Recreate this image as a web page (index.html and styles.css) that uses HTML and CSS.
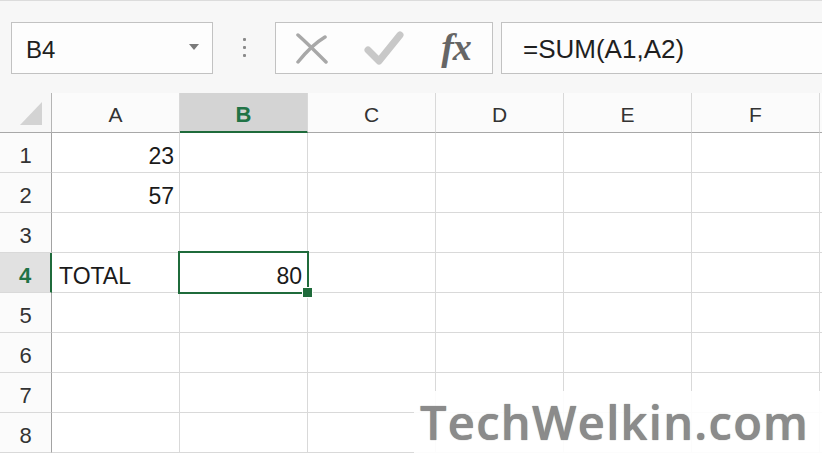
FILE: index.html
```html
<!DOCTYPE html>
<html>
<head>
<meta charset="utf-8">
<link rel="stylesheet" href="styles.css">
</head>
<body>
<div class="app">
  <div class="topbar">
    <div class="namebox">
      <span class="nb-text">B4</span>
      <svg class="nb-caret" width="10" height="6" viewBox="0 0 10 6"><path d="M0 0 H10 L5 6 Z" fill="#7a7a7a"/></svg>
    </div>
    <div class="dots"><i></i><i></i><i></i></div>
    <div class="fxbox">
      <div class="slot">
        <svg width="34" height="32" viewBox="0 0 34 32"><path d="M3 3 C12 11 22 21 31 30" stroke="#a8a8a8" stroke-width="3.5" fill="none" stroke-linecap="round"/><path d="M30 5 C20 11 11 20 3 30" stroke="#a8a8a8" stroke-width="3.5" fill="none" stroke-linecap="round"/></svg>
      </div>
      <div class="slot">
        <svg width="40" height="34" viewBox="0 0 40 34"><path d="M4 19 L15 30 L36 4" stroke="#c8c8c8" stroke-width="7" fill="none" stroke-linecap="round" stroke-linejoin="round"/></svg>
      </div>
      <div class="slot"><span class="fx">fx</span></div>
    </div>
    <div class="formula">=SUM(A1,A2)</div>
  </div>

  <div class="grid">
    <div class="corner"><svg width="22" height="23" viewBox="0 0 22 23"><path d="M22 0 V23 H0 Z" fill="#d3d3d3"/></svg></div>
    <div class="colh">A</div>
    <div class="colh sel">B</div>
    <div class="colh">C</div>
    <div class="colh">D</div>
    <div class="colh">E</div>
    <div class="colh">F</div>
    <div class="colh"></div>

    <div class="rowh">1</div><div class="cell num">23</div><div class="cell"></div><div class="cell"></div><div class="cell"></div><div class="cell"></div><div class="cell"></div><div class="cell"></div>
    <div class="rowh">2</div><div class="cell num">57</div><div class="cell"></div><div class="cell"></div><div class="cell"></div><div class="cell"></div><div class="cell"></div><div class="cell"></div>
    <div class="rowh">3</div><div class="cell"></div><div class="cell"></div><div class="cell"></div><div class="cell"></div><div class="cell"></div><div class="cell"></div><div class="cell"></div>
    <div class="rowh sel">4</div><div class="cell">TOTAL</div><div class="cell num active">80<span class="handle"></span></div><div class="cell"></div><div class="cell"></div><div class="cell"></div><div class="cell"></div><div class="cell"></div>
    <div class="rowh">5</div><div class="cell"></div><div class="cell"></div><div class="cell"></div><div class="cell"></div><div class="cell"></div><div class="cell"></div><div class="cell"></div>
    <div class="rowh">6</div><div class="cell"></div><div class="cell"></div><div class="cell"></div><div class="cell"></div><div class="cell"></div><div class="cell"></div><div class="cell"></div>
    <div class="rowh">7</div><div class="cell"></div><div class="cell"></div><div class="cell"></div><div class="cell"></div><div class="cell"></div><div class="cell"></div><div class="cell"></div>
    <div class="rowh">8</div><div class="cell"></div><div class="cell"></div><div class="cell"></div><div class="cell"></div><div class="cell"></div><div class="cell"></div><div class="cell"></div>
  </div>

  <div class="watermark">TechWelkin.com</div>
</div>
</body>
</html>
```

FILE: styles.css
```css
* { box-sizing: border-box; }
html, body { margin: 0; padding: 0; }
body {
  width: 822px;
  height: 456px;
  overflow: hidden;
  background: #ffffff;
  font-family: "Liberation Sans", Arial, sans-serif;
  color: #222;
}
.app {
  position: relative;
  width: 822px;
  height: 456px;
  overflow: hidden;
}

/* ---------- top bar ---------- */
.topbar {
  height: 93px;
  display: flex;
  align-items: flex-start;
  padding: 21px 0 0 11px;
  background: #f7f7f7;
  border-top: 1px solid #dcdcdc;
}
.namebox {
  width: 202px;
  height: 52px;
  border: 1px solid #c2c2c2;
  background: #fdfdfd;
  display: flex;
  align-items: center;
  justify-content: space-between;
  padding: 4px 13px 0 14px;
}
.nb-text {
  font-size: 24px;
  color: #1f1f1f;
}
.nb-caret { margin-top: -6px; }
.dots {
  width: 62px;
  height: 52px;
  display: flex;
  flex-direction: column;
  align-items: center;
  justify-content: center;
  gap: 5px;
  padding-bottom: 2px;
}
.dots i {
  display: block;
  width: 3px;
  height: 3px;
  background: #8a8a8a;
  border-radius: 1px;
}
.fxbox {
  width: 218px;
  height: 52px;
  border: 1px solid #c2c2c2;
  background: #fdfdfd;
  display: flex;
  align-items: center;
}
.slot {
  width: 72px;
  height: 100%;
  display: flex;
  align-items: center;
  justify-content: center;
}
.fx {
  font-family: "Liberation Serif", "Times New Roman", serif;
  font-style: italic;
  font-weight: bold;
  font-size: 38px;
  color: #666666;
  letter-spacing: -1px;
  margin-top: -2px;
}
.formula {
  flex: 1;
  margin-left: 8px;
  margin-right: -3px;
  height: 52px;
  border: 1px solid #c2c2c2;
  background: #fdfdfd;
  font-size: 26px;
  color: #1f1f1f;
  display: flex;
  align-items: center;
  padding: 3px 0 0 21px;
}

/* ---------- grid ---------- */
.grid {
  display: grid;
  grid-template-columns: 52px repeat(7, 128px);
  grid-template-rows: 40px repeat(8, 40px);
  width: 948px;
}
.grid > div {
  border-right: 1px solid #d9d9d9;
  border-bottom: 1px solid #d9d9d9;
}
.corner {
  background: #f7f7f7;
  display: flex;
  align-items: flex-end;
  justify-content: flex-end;
  padding: 0 9px 7px 0;
  border-right-color: #b5b5b5 !important;
  border-bottom-color: #a8a8a8 !important;
}
.colh {
  background: #fbfbfb;
  display: flex;
  align-items: center;
  justify-content: center;
  padding-top: 5px;
  font-size: 21px;
  color: #333;
  border-bottom-color: #a8a8a8 !important;
}
.colh.sel {
  background: #d4d4d4;
  color: #217346;
  font-weight: bold;
  font-size: 22px;
  border-bottom: 2px solid #1f6b3b !important;
}
.rowh {
  background: #fbfbfb;
  display: flex;
  align-items: flex-end;
  justify-content: center;
  padding-bottom: 3px;
  font-size: 22px;
  line-height: 26px;
  color: #333;
  border-right-color: #a3a3a3 !important;
}
.rowh.sel {
  background: #e1e1e1;
  color: #217346;
  font-weight: bold;
  border-right: 2px solid #1f6b3b !important;
}
.cell {
  display: flex;
  align-items: flex-end;
  padding: 0 7px 3px 7px;
  font-size: 23px;
  line-height: 26px;
  color: #1a1a1a;
  background: #fff;
}
.cell.num { justify-content: flex-end; padding-right: 5px; }
.cell.active { position: relative; }
.cell.active::after {
  content: "";
  position: absolute;
  top: -2px;
  left: -2px;
  right: -2px;
  bottom: -2px;
  border: 2px solid #1f6b3b;
  pointer-events: none;
}
.handle {
  position: absolute;
  right: -6px;
  bottom: -6px;
  width: 11px;
  height: 11px;
  background: #1f6b3b;
  border: 1px solid #fff;
  z-index: 2;
}

/* ---------- watermark ---------- */
.watermark {
  position: absolute;
  left: 414px;
  top: 391px;
  width: 420px;
  height: 62px;
  background: rgba(255, 255, 255, 0.9);
  font-family: "Open Sans", "DejaVu Sans", sans-serif;
  font-weight: 600;
  font-size: 47px;
  line-height: 62px;
  color: #8b8b8b;
  padding-left: 6px;
  letter-spacing: 1.3px;
  text-shadow: 0 0 1px #6f6f6f;
}
```
